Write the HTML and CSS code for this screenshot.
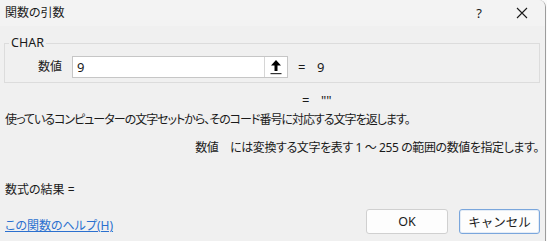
FILE: index.html
```html
<!DOCTYPE html>
<html lang="ja">
<head>
  <meta charset="UTF-8">
  <title>関数の引数</title>
  <link rel="stylesheet" href="styles.css">
</head>
<body>

<div class="window">
  <div class="titlebar">
    <span class="title">関数の引数</span>
    <span class="help">?</span>
    <span class="close">
      <svg width="12" height="12" viewBox="0 0 12 12"><path d="M1 1 L11 11 M11 1 L1 11" stroke="#1a1a1a" stroke-width="1.1" fill="none"/></svg>
    </span>
  </div>

  <div class="content">
    <fieldset class="group">
      <legend>CHAR</legend>
      <div class="arg-row">
        <label class="arg-name" for="arg1">数値</label>
        <div class="arg-box">
          <input id="arg1" class="arg-input" type="text" value="9">
          <span class="ref-btn">
            <svg width="12" height="16" viewBox="0 0 12 16"><path d="M6 1 L1 6.5 L4.5 6.5 L4.5 12 L7.5 12 L7.5 6.5 L11 6.5 Z" fill="#000"/><rect x="0.5" y="14" width="11" height="1.2" fill="#333"/></svg>
          </span>
        </div>
        <span class="arg-value"><span class="eq">=</span>9</span>
      </div>
    </fieldset>

    <div class="func-value"><span class="eq">=</span>""</div>

    <p class="desc">使っているコンピューターの文字セットから、そのコード番号に対応する文字を返します。</p>
    <p class="arg-desc">数値　には変換する文字を表す 1 ～ 255 の範囲の数値を指定します。</p>

    <p class="result">数式の結果 =</p>

    <div class="footer">
      <a class="help-link" href="#">この関数のヘルプ(H)</a>
      <div class="buttons">
        <button class="btn">OK</button>
        <button class="btn btn-focus">キャンセル</button>
      </div>
    </div>
  </div>
</div>

</body>
</html>
```

FILE: styles.css
```css
html, body {
  margin: 0;
  padding: 0;
  background: #fafafa;
}

body {
  font-family: "Noto Sans", "Noto Sans CJK JP", sans-serif;
  font-size: 12px;
  color: #1a1a1a;
  font-feature-settings: "palt";
}

.window {
  width: 545px;
  height: 241px;
  background: #f0f0f0;
  border-right: 1px solid #9c9c9c;
  border-top-right-radius: 7px;
  overflow: hidden;
}

.titlebar {
  height: 26px;
  background: #f3f3f3;
  display: flex;
  align-items: center;
  padding-left: 5px;
}

.title {
  flex: 1;
  font-size: 12px;
  line-height: 16px;
}

.help {
  width: 14px;
  text-align: center;
  margin-right: 30px;
  font-size: 13px;
}

.close {
  display: flex;
  margin-right: 17px;
}

.content {
  padding: 9px 5px 0 4px;
}

/* グループ枠 */
.group {
  margin: 0;
  padding: 0 0 4px 0;
  border: 1px solid #dcdcdc;
  min-width: 0;
}

.group legend {
  padding: 0 2px;
  margin-left: 4px;
  line-height: 16px;
  font-size: 12.5px;
}

.arg-row {
  display: flex;
  align-items: center;
  margin-top: 5px;
}

.arg-name {
  width: 57px;
  text-align: right;
  margin-right: 10px;
  line-height: 16px;
}

.arg-box {
  width: 214px;
  height: 20px;
  display: flex;
  background: #fff;
  border: 1px solid #c6c6c6;
}

.arg-input {
  flex: 1;
  border: none;
  outline: none;
  padding: 0 0 0 4px;
  font-family: "Noto Sans", sans-serif;
  font-size: 13px;
  color: #1a1a1a;
  background: transparent;
  min-width: 0;
}

.ref-btn {
  width: 22px;
  border-left: 1px solid #d6d6d6;
  display: flex;
  align-items: center;
  justify-content: center;
}

.arg-value {
  margin-left: 10px;
  font-size: 13px;
}

.eq {
  display: inline-block;
  width: 19px;
}

.func-value {
  padding-left: 298px;
  margin-top: 9px;
  line-height: 16px;
  font-size: 13px;
}

.desc {
  margin: 4px 0 0 1px;
  line-height: 16px;
  letter-spacing: -1px;
}

.arg-desc {
  margin: 12px 0 0 0;
  padding-right: 1px;
  text-align: right;
  line-height: 16px;
  letter-spacing: -0.4px;
}

.result {
  margin: 26px 0 0 1px;
  line-height: 16px;
}

.footer {
  display: flex;
  align-items: center;
  justify-content: space-between;
  margin-top: 11px;
}

.help-link {
  margin-left: 1px;
  margin-top: 9px;
  color: #2b70cf;
  text-decoration: underline;
  line-height: 16px;
}

.buttons {
  display: flex;
  gap: 11px;
}

.btn {
  width: 82px;
  height: 25px;
  background: #fdfdfd;
  border: 1px solid #d0d0d0;
  border-radius: 3px;
  font-family: "Noto Sans", "Noto Sans CJK JP", sans-serif;
  font-size: 12.5px;
  color: #1a1a1a;
  padding: 0;
}

.btn-focus {
  width: 81px;
  border-color: #7aa6dc;
  box-shadow: inset 0 0 0 1px #e4ecf6;
}
```
